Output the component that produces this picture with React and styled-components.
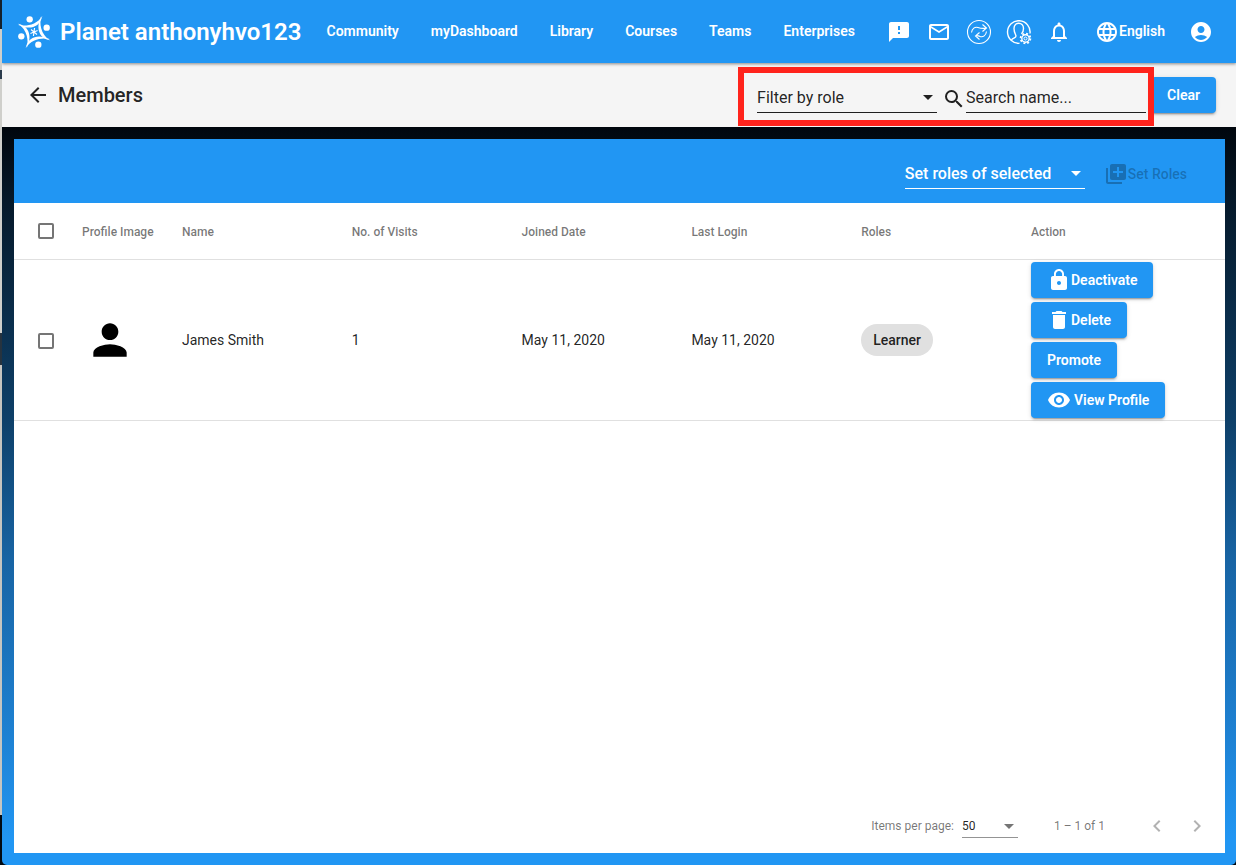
import React from "react";
import styled, { createGlobalStyle, css } from "styled-components";
import {
  MdFeedback, MdMailOutline, MdNotificationsNone, MdLanguage, MdAccountCircle,
  MdSearch, MdArrowBack, MdLibraryAdd, MdLock, MdDelete, MdVisibility, MdPerson,
  MdChevronLeft, MdChevronRight, MdArrowDropDown,
} from "react-icons/md";

const BLUE = "#2196f3";
const INK = "rgba(0, 0, 0, 0.87)";
const MUTED = "rgba(0, 0, 0, 0.54)";

const GlobalStyle = createGlobalStyle`
  *, *::before, *::after { box-sizing: border-box; }
  body {
    margin: 0;
    font-family: Roboto, "Liberation Sans", sans-serif;
    font-size: 14px;
    color: ${INK};
    background: #05101a;
  }
  button, input, select { font: inherit; color: inherit; }
  svg { display: block; flex: none; }
`;

const Desktop = styled.div`
  min-height: 100vh;
  display: flex;
  padding-left: 2px;
  background: linear-gradient(#14202b 0 29px, #cfcfcb 29px 70px, #2b3c4c 70px 79px,
    #cfcfcb 79px 333px, #26333f 333px 365px, #c6c5c0 365px 815px, #020a12 815px);
`;

const Window = styled.div`
  flex: 1;
  min-width: 0;
  display: flex;
  flex-direction: column;
  border-radius: 0 0 5px 5px;
  overflow: hidden;
  background: linear-gradient(#00060d 127px, #06192a 200px, #0e4069 420px, #1864a4 560px, #1e82d4 740px, ${BLUE} 840px);
`;

const Header = styled.header`
  position: relative;
  display: flex;
  align-items: center;
  height: 63px;
  padding: 0 23px 0 12px;
  color: #fff;
  background: ${BLUE};
  box-shadow: 0 1px 3px rgba(0, 0, 0, 0.45);
`;

const Brand = styled.a`
  display: flex;
  align-items: center;
  gap: 6px;
  color: inherit;
  text-decoration: none;
  font-size: 24px;
  line-height: 32px;
  font-weight: 600;
  white-space: nowrap;
`;

const Nav = styled.nav`
  display: flex;
  gap: 32px;
  margin-left: 25px;
  padding-bottom: 2px;
`;

const NavLink = styled.a`
  color: inherit;
  text-decoration: none;
  font-weight: 600;
  line-height: 20px;
`;

const HeaderTools = styled.div`
  display: flex;
  align-items: center;
  gap: 16px;
  margin-left: auto;
`;

const IconButton = styled.button`
  display: flex;
  align-items: center;
  justify-content: center;
  width: 24px;
  height: 24px;
  padding: 0;
  border: 0;
  background: none;
  font-size: 24px;
  &:disabled { color: rgba(0, 0, 0, 0.3); }
`;

const LanguageButton = styled.button`
  display: flex;
  align-items: center;
  height: 36px;
  margin: 0 8px;
  padding: 0;
  border: 0;
  background: none;
  font-weight: 600;
  svg { font-size: 24px; }
  span { padding-bottom: 2px; }
`;

const PageBar = styled.div`
  display: flex;
  align-items: center;
  height: 64px;
  padding: 0 20px 0 24px;
  background: #f5f5f5;
`;

const PageTitle = styled.h1`
  margin: 0 auto 0 8px;
  font-size: 20px;
  line-height: 32px;
  font-weight: 500;
`;

const Filters = styled.div`
  position: relative;
  display: flex;
  align-items: center;
  margin-right: 5px;
  &::after {
    content: "";
    position: absolute;
    inset: -10px -8px -13px -19px;
    border: 6px solid #ff231c;
    pointer-events: none;
    z-index: 1;
  }
`;

const fieldLine = css`
  width: 100%;
  padding: 0;
  border: 0;
  border-bottom: 1px solid currentColor;
  border-radius: 0;
  background: transparent;
  outline: 0;
`;

const SelectBox = styled.span`
  position: relative;
  display: block;
  width: ${(p) => (p.$compact ? 56 : 180)}px;
  svg {
    position: absolute;
    top: ${(p) => (p.$compact ? 0 : 8)}px;
    right: -3px;
    font-size: 24px;
    color: ${(p) => (p.$compact ? MUTED : "inherit")};
    pointer-events: none;
  }
`;

const Select = styled.select`
  ${fieldLine}
  appearance: none;
  height: ${(p) => (p.$compact ? 24 : 36)}px;
  padding-top: ${(p) => (p.$compact ? 0 : 6)}px;
  font-size: ${(p) => (p.$compact ? 12 : 16)}px;
  font-weight: ${(p) => (p.$strong ? 500 : 400)};
  border-bottom-color: ${(p) => (p.$compact ? "rgba(0,0,0,0.42)" : "currentColor")};
  option { color: ${INK}; }
`;

const SearchField = styled.label`
  display: flex;
  align-items: center;
  svg { margin: 8px 0 0 5px; font-size: 24px; }
`;

const SearchInput = styled.input`
  ${fieldLine}
  width: 180px;
  height: 36px;
  padding-top: 6px;
  font-size: 16px;
  &::placeholder { color: ${INK}; opacity: 1; }
`;

const Button = styled.button`
  display: flex;
  align-items: center;
  gap: ${(p) => p.$gap || 0}px;
  height: 36px;
  padding: 0 16px;
  border: 0;
  border-radius: 4px;
  color: #fff;
  background: ${BLUE};
  font-weight: 600;
  white-space: nowrap;
  box-shadow: 0 3px 1px -2px rgba(0, 0, 0, 0.2), 0 2px 2px rgba(0, 0, 0, 0.14), 0 1px 5px rgba(0, 0, 0, 0.12);
  svg { font-size: 24px; }
  &:disabled {
    padding-top: 6px;
    color: rgba(0, 0, 0, 0.26);
    background: none;
    box-shadow: none;
    font-weight: 500;
  }
`;

const Card = styled.main`
  flex: 1;
  display: flex;
  flex-direction: column;
  margin: 12px 11px 12px 12px;
  background: #fff;
`;

const CardBar = styled.div`
  display: flex;
  align-items: center;
  justify-content: flex-end;
  gap: 3px;
  height: 64px;
  padding: 0 22px 0 16px;
  color: #fff;
  background: ${BLUE};
`;

const Table = styled.table`
  width: 100%;
  table-layout: fixed;
  border-collapse: separate;
  border-spacing: 0;
  th, td {
    padding: 0;
    text-align: left;
    border-bottom: 1px solid #e0e0e0;
  }
  th {
    height: 57px;
    padding-top: 2px;
    font-size: 12px;
    font-weight: 500;
    color: ${MUTED};
  }
  td { height: 161px; }
  th:first-child { padding: 0 0 0 24px; }
  td:first-child { padding: 2px 0 0 24px; }
`;

const Col = styled.col`
  width: ${(p) => (p.$width ? `${p.$width}px` : "auto")};
`;

const Checkbox = styled.input`
  appearance: none;
  display: block;
  width: 16px;
  height: 16px;
  margin: 0;
  border: 2px solid #757575;
  border-radius: 2px;
  &:checked { background: ${BLUE}; border-color: ${BLUE}; }
`;

const Avatar = styled.span`
  display: block;
  padding-left: 3px;
  color: #000;
  font-size: 50px;
`;

const Chip = styled.span`
  display: inline-flex;
  align-items: center;
  height: 32px;
  padding: 0 12px;
  border-radius: 16px;
  background: #e0e0e0;
  font-weight: 500;
`;

const Actions = styled.div`
  display: flex;
  flex-direction: column;
  align-items: flex-start;
  gap: 4px;
`;

const Paginator = styled.footer`
  display: flex;
  align-items: center;
  justify-content: flex-end;
  height: 56px;
  margin-top: auto;
  padding: 2px 16px 0;
  font-size: 12px;
  color: ${MUTED};
`;

const PageSize = styled.label`
  display: flex;
  align-items: center;
  gap: 8px;
  color: ${MUTED};
  select { color: ${INK}; }
`;

const Range = styled.span`
  margin: 0 40px 0 36px;
`;

const Pages = styled.div`
  display: flex;
  gap: 16px;
`;

function Logo() {
  return (
    <svg width="40" height="40" viewBox="-60 -60 120 120" fill="#fff" aria-hidden="true">
      {[0, 90, 180, 270].map((a) => (
        <g key={a} transform={`rotate(${a})`}>
          <circle cx="-13" cy="-38" r="9.5" />
          <path d="M-48 -22 C-28 -15 8 -20 25 -48 C17 -9 -20 -7 -48 -22Z" />
        </g>
      ))}
      <path d="M0 -12V12M-10 -6L10 6M-10 6L10 -6" stroke="#fff" strokeWidth="3.500" transform="rotate(8)" />
    </svg>
  );
}

function SyncIcon() {
  return (
    <svg width="26" height="26" viewBox="-1 -1 26 26" fill="none" stroke="currentColor" strokeWidth="1.100">
      <circle cx="12" cy="12" r="11.500" />
      <path d="M4.500 12.500C5 8.500 8 6.500 11 7.500S15.500 9 19.500 8M15.500 4.500L19.500 8L15.500 11.500" />
      <path d="M19.500 11.500C19 15.500 16 17.500 13 16.500S10 15 8.500 16M12.500 12.500L8.500 16L12.500 19.500" />
    </svg>
  );
}

function ManagerIcon() {
  return (
    <svg width="26" height="26" viewBox="-1 -1 26 26" fill="none" stroke="currentColor" strokeWidth="1.400">
      <path d="M23 13.500A11.300 11.300 0 1 0 12.500 23.300" />
      <path d="M4.500 20C5.500 18 9 18 9 16C9 14.500 7 13 7 8.500C7 1.500 16.500 1.500 16.500 8.500C16.500 11 16 12.500 14.500 14" />
      <circle cx="18.500" cy="18.500" r="3.700" />
      <circle cx="18.500" cy="18.500" r="1.500" strokeWidth="1" />
      <circle cx="18.500" cy="18.500" r="4.900" strokeWidth="1.800" strokeDasharray="1.924 1.924" />
    </svg>
  );
}

const LINKS = ["Community", "myDashboard", "Library", "Courses", "Teams", "Enterprises"];

const TOOLS = [
  ["Feedback", MdFeedback],
  ["Mail", MdMailOutline],
  ["Sync", SyncIcon],
  ["Manager settings", ManagerIcon],
  ["Notifications", MdNotificationsNone],
];

const COLUMNS = ["Profile Image", "Name", "No. of Visits", "Joined Date", "Last Login", "Roles", "Action"];

const MEMBERS = [
  { name: "James Smith", visits: 1, joined: "May 11, 2020", login: "May 11, 2020", role: "Learner" },
];

function Dropdown({ label, children, ...rest }) {
  return (
    <SelectBox $compact={rest.$compact}>
      <Select aria-label={label} {...rest}>{children}</Select>
      <MdArrowDropDown />
    </SelectBox>
  );
}

export default function App() {
  return (
    <Desktop>
      <GlobalStyle />
      <Window>
        <Header>
          <Brand href="#home"><Logo />Planet anthonyhvo123</Brand>
          <Nav>
            {LINKS.map((l) => <NavLink key={l} href={`#${l}`}>{l}</NavLink>)}
          </Nav>
          <HeaderTools>
            {TOOLS.map(([label, Icon]) => (
              <IconButton key={label} aria-label={label}><Icon /></IconButton>
            ))}
            <LanguageButton><MdLanguage /><span>English</span></LanguageButton>
            <IconButton aria-label="Account"><MdAccountCircle /></IconButton>
          </HeaderTools>
        </Header>

        <PageBar>
          <IconButton aria-label="Back"><MdArrowBack /></IconButton>
          <PageTitle>Members</PageTitle>
          <Filters>
            <Dropdown label="Filter by role"><option>Filter by role</option></Dropdown>
            <SearchField>
              <MdSearch />
              <SearchInput type="text" aria-label="Search name" placeholder="Search name..." />
            </SearchField>
          </Filters>
          <Button>Clear</Button>
        </PageBar>

        <Card>
          <CardBar>
            <Dropdown label="Set roles of selected" $strong><option>Set roles of selected</option></Dropdown>
            <Button disabled><MdLibraryAdd />Set Roles</Button>
          </CardBar>
          <Table>
            <colgroup>
              <Col $width={68} /><Col $width={100} /><Col /><Col /><Col /><Col /><Col /><Col $width={194} />
            </colgroup>
            <thead>
              <tr>
                <th><Checkbox type="checkbox" aria-label="Select all members" /></th>
                {COLUMNS.map((c) => <th key={c}>{c}</th>)}
              </tr>
            </thead>
            <tbody>
              {MEMBERS.map((m) => (
                <tr key={m.name}>
                  <td><Checkbox type="checkbox" aria-label={`Select ${m.name}`} /></td>
                  <td><Avatar><MdPerson /></Avatar></td>
                  <td>{m.name}</td>
                  <td>{m.visits}</td>
                  <td>{m.joined}</td>
                  <td>{m.login}</td>
                  <td><Chip>{m.role}</Chip></td>
                  <td>
                    <Actions>
                      <Button><MdLock />Deactivate</Button>
                      <Button><MdDelete />Delete</Button>
                      <Button>Promote</Button>
                      <Button $gap={3}><MdVisibility />View Profile</Button>
                    </Actions>
                  </td>
                </tr>
              ))}
            </tbody>
          </Table>
          <Paginator>
            <PageSize>
              Items per page:
              <Dropdown label="Items per page" $compact><option>50</option></Dropdown>
            </PageSize>
            <Range>1 – 1 of 1</Range>
            <Pages>
              <IconButton disabled aria-label="Previous page"><MdChevronLeft /></IconButton>
              <IconButton disabled aria-label="Next page"><MdChevronRight /></IconButton>
            </Pages>
          </Paginator>
        </Card>
      </Window>
    </Desktop>
  );
}
